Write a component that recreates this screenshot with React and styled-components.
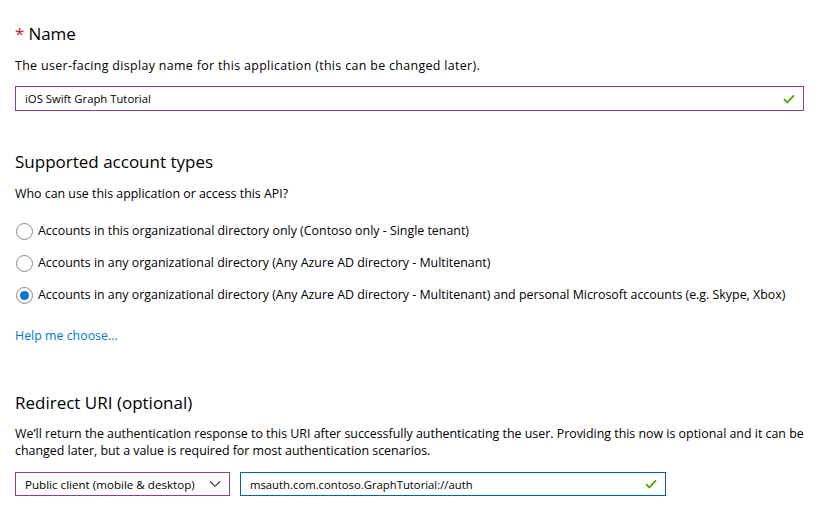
import React from 'react';
import styled, { createGlobalStyle } from 'styled-components';

const GlobalStyle = createGlobalStyle`
  body {
    margin: 0;
    background: #fff;
    font-family: 'Open Sans', 'Noto Sans', sans-serif;
    color: #000;
  }
`;

const Page = styled.div`
  padding: 0 15px;
  width: 820px;
  box-sizing: border-box;
`;

const Section = styled.section`
  padding-top: ${(p) => p.top}px;
`;

const Heading = styled.h2`
  margin: 0;
  font-weight: 400;
  font-size: 17px;
  line-height: 24px;
  color: #000;
`;

const Required = styled.span`
  color: #e00b1c;
  margin-right: 4px;
`;

const Description = styled.p`
  margin: ${(p) => p.gap || 11}px 0 0;
  font-size: 12.4px;
  line-height: 17px;
  letter-spacing: ${(p) => p.spacing || 0}px;
  color: #000;
`;

const Field = styled.div`
  display: flex;
  align-items: center;
  box-sizing: border-box;
  height: ${(p) => p.h || 25}px;
  width: ${(p) => p.w}px;
  margin-top: ${(p) => p.mt || 0}px;
  border: 1px solid ${(p) => p.color};
  padding: 0 8px 0 9px;
  font-size: ${(p) => p.fs || 11.3}px;
  background: #fff;
`;

const FieldText = styled.span`
  flex: 1;
  white-space: nowrap;
`;

const Row = styled.div`
  display: flex;
  gap: 10px;
  margin-top: 13px;
`;

const RadioList = styled.div`
  display: flex;
  flex-direction: column;
  gap: 14px;
  margin-top: 20px;
`;

const RadioRow = styled.label`
  display: flex;
  align-items: center;
  gap: 5px;
  font-size: 12.4px;
  line-height: 18px;
  margin-left: 1px;
  white-space: nowrap;
`;

const RadioCircle = styled.span`
  width: 17px;
  height: 17px;
  box-sizing: border-box;
  border-radius: 50%;
  border: 1px solid #8a8886;
  display: flex;
  align-items: center;
  justify-content: center;
  &::after {
    content: '';
    width: 9px;
    height: 9px;
    border-radius: 50%;
    background: ${(p) => (p.checked ? '#0078d4' : 'transparent')};
  }
`;

const HelpLink = styled.a`
  display: block;
  margin-top: 23px;
  font-size: 12.4px;
  line-height: 17px;
  color: #0078d4;
  text-decoration: none;
`;

const Check = () => (
  <svg width="12" height="10" viewBox="0 0 12 10">
    <path d="M1 5.2 L4.3 8.4 L11 1.4" fill="none" stroke="#57a300" strokeWidth="1.8" />
  </svg>
);

const Chevron = () => (
  <svg width="12" height="8" viewBox="0 0 12 8">
    <path d="M1 1.5 L6 6.3 L11 1.5" fill="none" stroke="#333" strokeWidth="1.1" />
  </svg>
);

export default function App() {
  return (
    <Page>
      <GlobalStyle />
      <Section top={22}>
        <Heading>
          <Required>*</Required>Name
        </Heading>
        <Description spacing={0.35}>
          The user-facing display name for this application (this can be changed later).
        </Description>
        <Field w={789} color="#8a3ca4" mt={12}>
          <FieldText>iOS Swift Graph Tutorial</FieldText>
          <Check />
        </Field>
      </Section>

      <Section top={39}>
        <Heading>Supported account types</Heading>
        <Description>Who can use this application or access this API?</Description>
        <RadioList>
          <RadioRow>
            <RadioCircle />
            Accounts in this organizational directory only (Contoso only - Single tenant)
          </RadioRow>
          <RadioRow>
            <RadioCircle />
            Accounts in any organizational directory (Any Azure AD directory - Multitenant)
          </RadioRow>
          <RadioRow>
            <RadioCircle checked />
            Accounts in any organizational directory (Any Azure AD directory - Multitenant) and
            personal Microsoft accounts (e.g. Skype, Xbox)
          </RadioRow>
        </RadioList>
        <HelpLink href="#">Help me choose...</HelpLink>
      </Section>

      <Section top={47}>
        <Heading>Redirect URI (optional)</Heading>
        <Description gap={10}>
          We’ll return the authentication response to this URI after successfully authenticating
          the user. Providing this now is optional and it can be changed later, but a value is
          required for most authentication scenarios.
        </Description>
        <Row>
          <Field w={215} h={24} fs={11.6} color="#8a3ca4">
            <FieldText>Public client (mobile &amp; desktop)</FieldText>
            <Chevron />
          </Field>
          <Field w={426} h={24} color="#0063b1">
            <FieldText>msauth.com.contoso.GraphTutorial://auth</FieldText>
            <Check />
          </Field>
        </Row>
      </Section>
    </Page>
  );
}
